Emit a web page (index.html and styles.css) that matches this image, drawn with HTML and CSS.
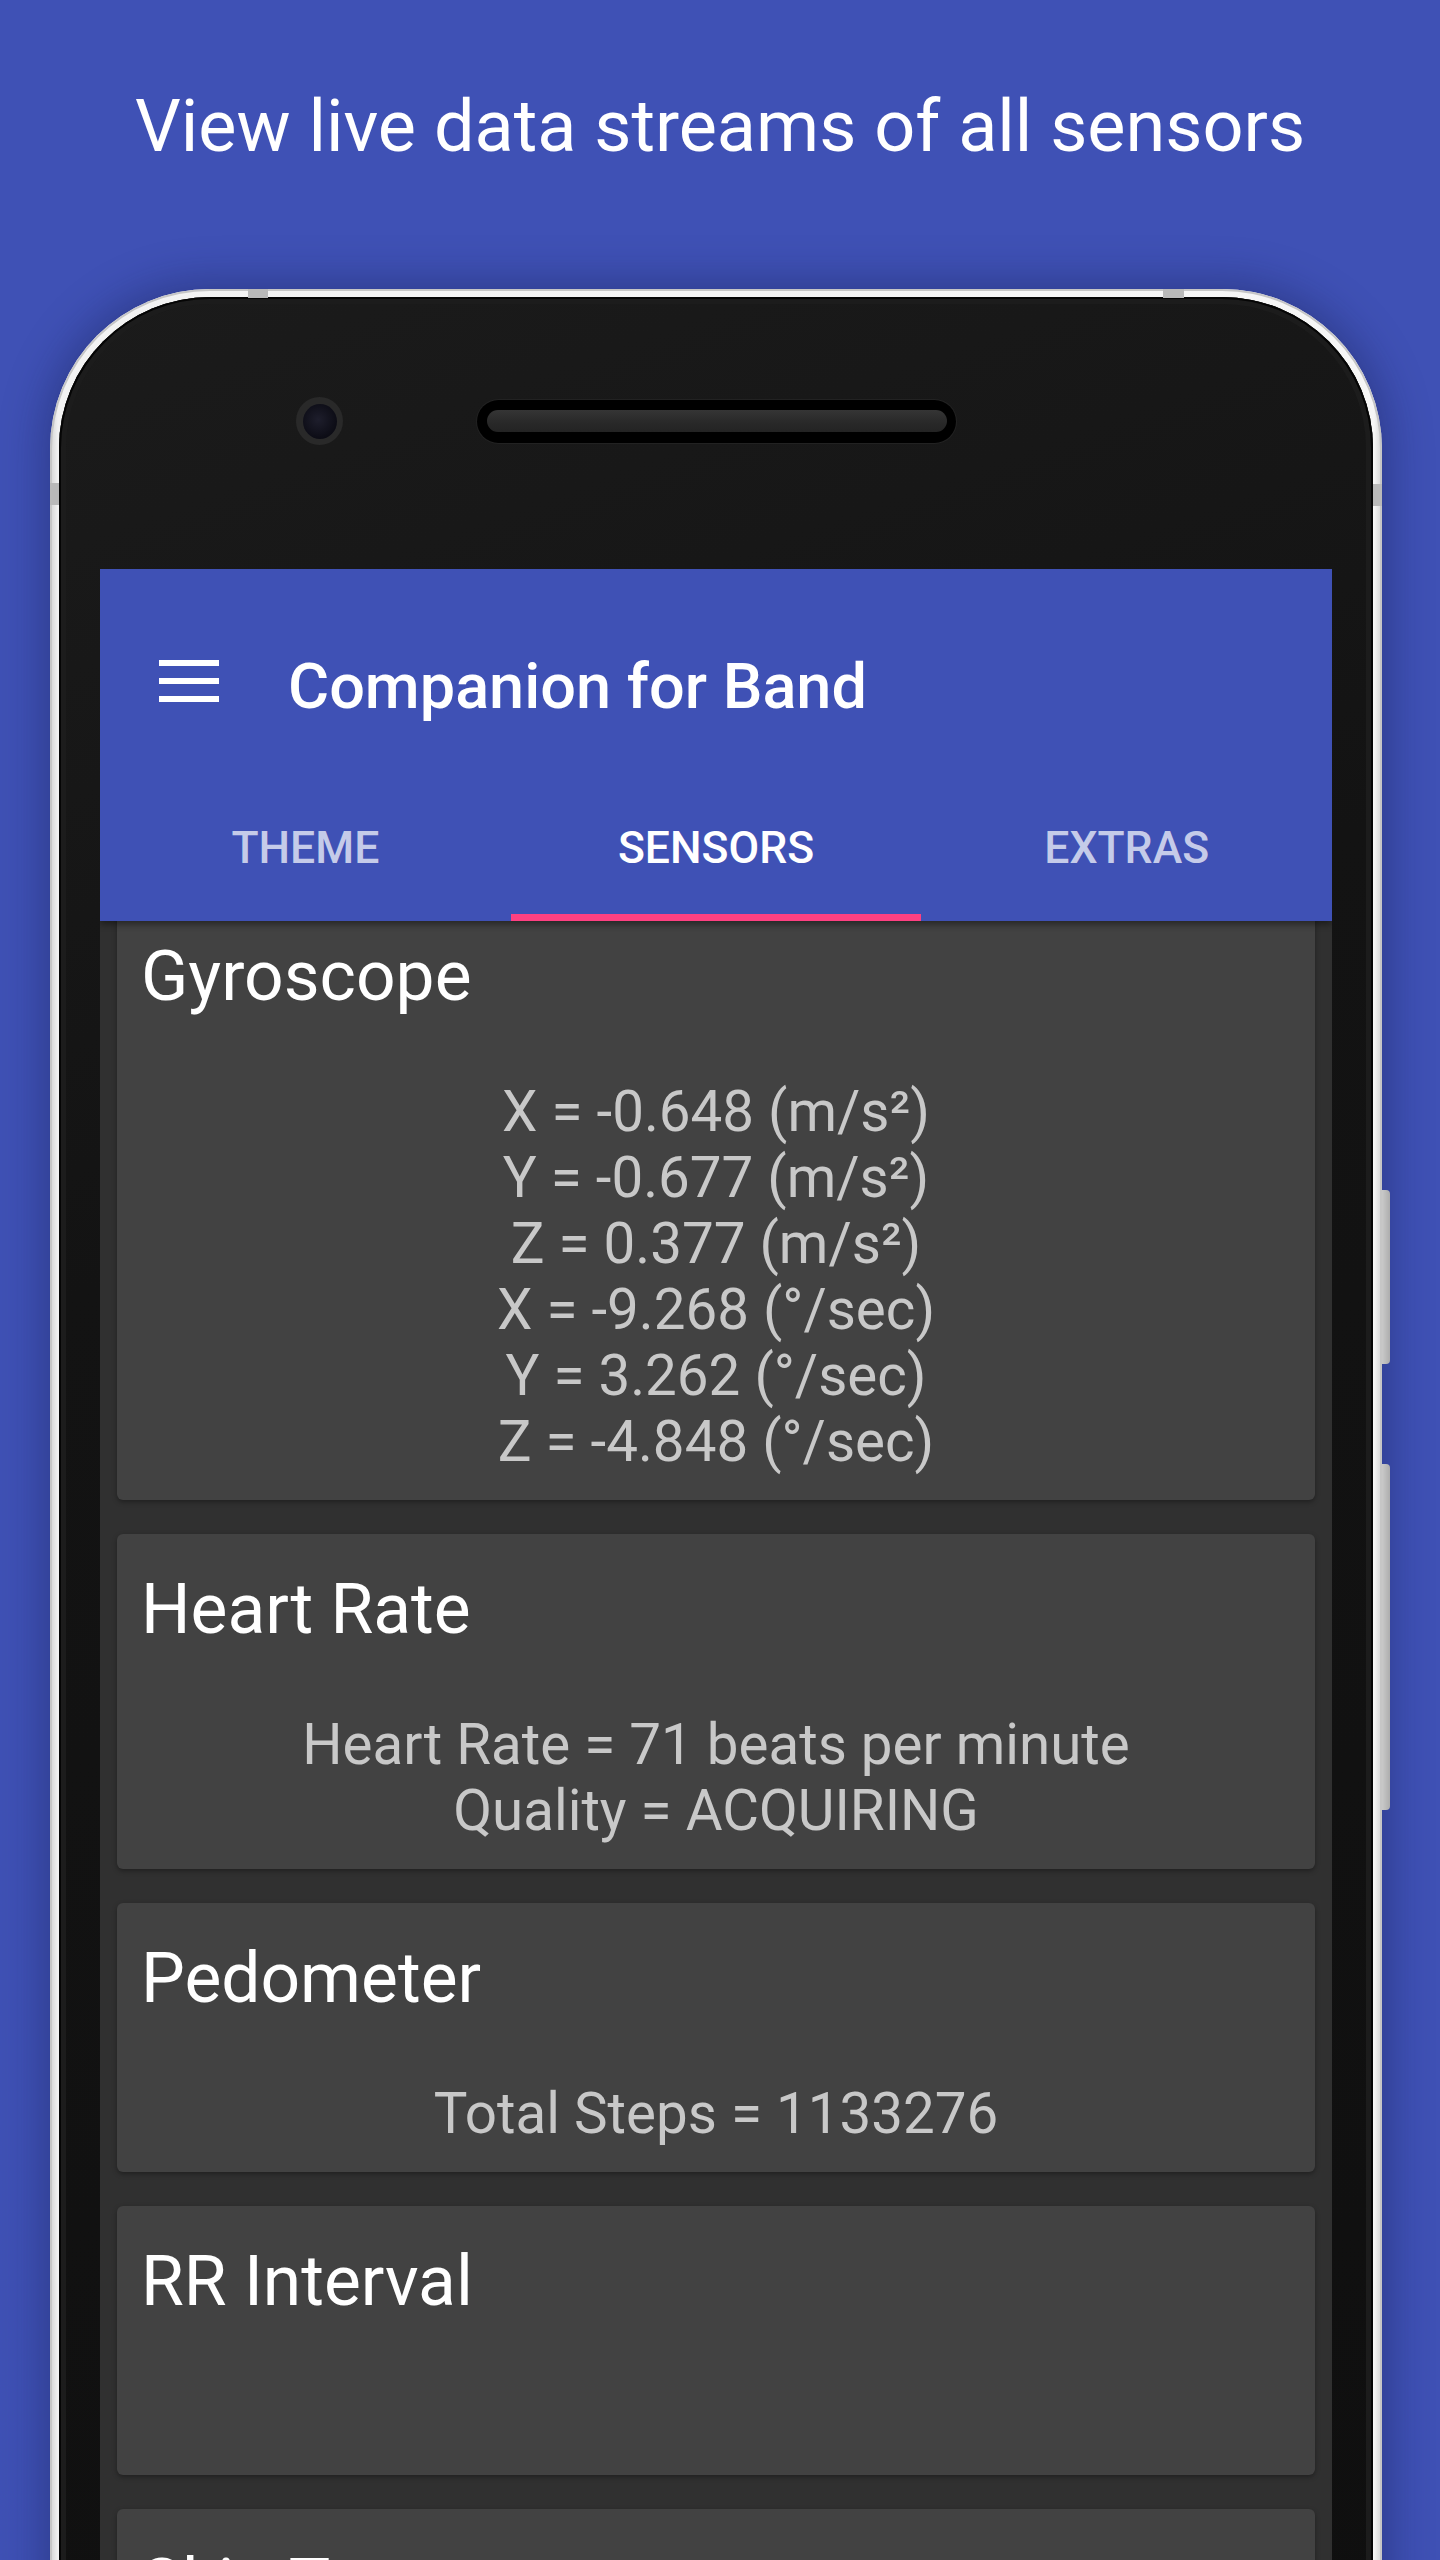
FILE: index.html
```html
<!DOCTYPE html>
<html lang="en">
<head>
<meta charset="utf-8">
<title>Companion for Band</title>
<link rel="stylesheet" href="styles.css">
</head>
<body>
<h1 class="headline">View live data streams of all sensors</h1>
<div class="phone">
  <span class="antenna antenna-tl"></span>
  <span class="antenna antenna-tr"></span>
  <span class="antenna antenna-l"></span>
  <span class="antenna antenna-r"></span>
  <span class="side-btn btn-power"></span>
  <span class="side-btn btn-volume"></span>
  <div class="bezel">
    <div class="bezel-top">
      <div class="camera"><div class="lens"></div></div>
      <div class="speaker"><div class="grille"></div></div>
    </div>
    <div class="screen">
      <header class="appbar">
        <div class="toolbar">
          <svg class="menu" width="60" height="42" viewBox="0 0 60 42" aria-hidden="true">
            <rect x="0" y="0" width="60" height="6" fill="#fff"/>
            <rect x="0" y="18" width="60" height="6" fill="#fff"/>
            <rect x="0" y="36" width="60" height="6" fill="#fff"/>
          </svg>
          <span class="app-title">Companion for Band</span>
        </div>
        <nav class="tabs">
          <div class="tab"><span class="tab-label">THEME</span></div>
          <div class="tab active"><span class="tab-label">SENSORS</span><span class="indicator"></span></div>
          <div class="tab"><span class="tab-label">EXTRAS</span></div>
        </nav>
      </header>
      <main class="content">
        <section class="card">
          <h2 class="card-title">Gyroscope</h2>
          <div class="values">
            <p>X = -0.648 (m/s²)</p>
            <p>Y = -0.677 (m/s²)</p>
            <p>Z = 0.377 (m/s²)</p>
            <p>X = -9.268 (°/sec)</p>
            <p>Y = 3.262 (°/sec)</p>
            <p>Z = -4.848 (°/sec)</p>
          </div>
        </section>
        <section class="card">
          <h2 class="card-title">Heart Rate</h2>
          <div class="values">
            <p>Heart Rate = 71 beats per minute</p>
            <p>Quality = ACQUIRING</p>
          </div>
        </section>
        <section class="card">
          <h2 class="card-title">Pedometer</h2>
          <div class="values">
            <p>Total Steps = 1133276</p>
          </div>
        </section>
        <section class="card">
          <h2 class="card-title">RR Interval</h2>
          <div class="values">
            <p>&nbsp;</p>
          </div>
        </section>
        <section class="card">
          <h2 class="card-title">Skin Temperature</h2>
          <div class="values">
            <p>&nbsp;</p>
          </div>
        </section>
      </main>
    </div>
  </div>
</div>
</body>
</html>
```

FILE: styles.css
```css
html, body {
  margin: 0;
  padding: 0;
}

body {
  width: 1440px;
  height: 2560px;
  overflow: hidden;
  background: #3f51b5;
  font-family: Roboto, "Noto Sans", "Liberation Sans", sans-serif;
}

.headline {
  margin: 0;
  padding-top: 84px;
  font-size: 72px;
  line-height: 86px;
  font-weight: 400;
  color: #ffffff;
  text-align: center;
}

/* ---------- phone frame ---------- */
.phone {
  position: relative;
  width: 1332px;
  height: 2400px;
  margin: 119px 0 0 50px;
  padding: 8px 9px 0 9px;
  box-sizing: border-box;
  border-radius: 160px 160px 0 0;
  background: linear-gradient(90deg, #d2d2d2 0%, #f2f2f2 0.6%, #f6f6f6 99.4%, #d2d2d2 100%);
  box-shadow: inset 0 0 0 2px #c6c6c6, 0 0 42px 8px rgba(18, 24, 70, 0.35);
}

.antenna {
  position: absolute;
  background: #b9b9b9;
}
.antenna-tl { left: 198px; top: 0; width: 20px; height: 9px; }
.antenna-tr { left: 1113px; top: 0; width: 21px; height: 9px; }
.antenna-l { left: 0; top: 194px; width: 9px; height: 22px; }
.antenna-r { right: 0; top: 195px; width: 9px; height: 22px; }

.side-btn {
  position: absolute;
  right: -8px;
  width: 8px;
  background: linear-gradient(90deg, #c9c9c9, #adadad);
  border-radius: 0 4px 4px 0;
}
.btn-power { top: 901px; height: 174px; }
.btn-volume { top: 1175px; height: 346px; }

.bezel {
  height: 100%;
  display: flex;
  flex-direction: column;
  padding: 0 41px;
  box-sizing: border-box;
  border-radius: 151px 151px 0 0;
  background: linear-gradient(160deg, #1b1b1b 0%, #131313 35%, #0f0f0f 100%);
  box-shadow: inset 0 0 0 2px #050505, inset 0 0 0 7px #1c1c1c;
  overflow: hidden;
}

.bezel-top {
  height: 272px;
  flex: none;
  display: flex;
  align-items: center;
  align-self: stretch;
  padding: 100px 0 124px 196px;
  box-sizing: border-box;
}

.camera {
  width: 47px;
  height: 48px;
  border-radius: 50%;
  background: #292929;
  display: flex;
  align-items: center;
  justify-content: center;
}
.lens {
  width: 34px;
  height: 35px;
  border-radius: 50%;
  background: radial-gradient(circle at 45% 45%, #1e1e2c 0%, #0c0c15 70%);
}

.speaker {
  margin-left: 134px;
  width: 479px;
  height: 43px;
  border-radius: 22px;
  background: #000000;
  display: flex;
  align-items: center;
  justify-content: center;
  box-shadow: 0 0 0 1px #222;
}
.grille {
  width: 460px;
  height: 22px;
  border-radius: 11px;
  background: linear-gradient(180deg, #353535 0%, #2a2a2a 50%, #232323 100%);
}

/* ---------- screen ---------- */
.screen {
  flex: 1;
  background: #303030;
  overflow: hidden;
  display: flex;
  flex-direction: column;
}

.appbar {
  position: relative;
  z-index: 2;
  background: #3f51b5;
  box-shadow: 0 3px 7px rgba(0, 0, 0, 0.45);
  flex: none;
}

.toolbar {
  height: 188px;
  box-sizing: border-box;
  padding: 46px 0 0 59px;
  display: flex;
  align-items: center;
}

.menu {
  display: block;
  margin-bottom: 10px;
  flex: none;
}

.app-title {
  margin-left: 69px;
  font-size: 63px;
  font-weight: 500;
  color: #ffffff;
  white-space: nowrap;
}

.tabs {
  display: flex;
  height: 164px;
}

.tab {
  flex: 1;
  display: flex;
  flex-direction: column;
  align-items: center;
}

.tab-label {
  margin-top: 65px;
  font-size: 44.5px;
  font-weight: 500;
  color: #c5cbe9;
}

.tab.active .tab-label {
  color: #ffffff;
}

.indicator {
  margin-top: auto;
  align-self: stretch;
  height: 7px;
  background: #ff4081;
}

/* ---------- cards ---------- */
.content {
  margin-top: -20px;
  padding: 0 17px;
}

.card {
  background: #424242;
  border-radius: 6px;
  padding: 36px 24px 25px;
  margin-bottom: 34px;
  box-shadow: 0 2px 5px rgba(0, 0, 0, 0.35);
}

.card-title {
  margin: 0;
  font-size: 69.5px;
  line-height: 80px;
  font-weight: 400;
  color: #ffffff;
}

.values {
  margin-top: 62px;
  text-align: center;
  font-size: 56.5px;
  line-height: 66px;
  color: #c8c8c8;
}

.values p {
  margin: 0;
}
```
